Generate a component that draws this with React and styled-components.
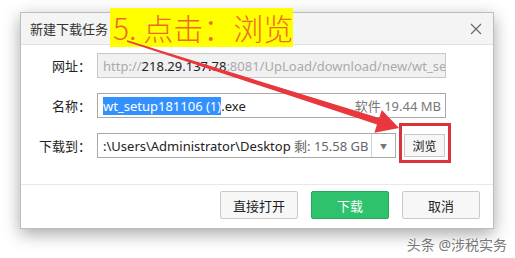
import React from 'react';
import styled, { createGlobalStyle } from 'styled-components';

const GlobalStyle = createGlobalStyle`
  html, body {
    margin: 0;
    padding: 0;
    background: #fff;
  }
  body {
    font-family: "Noto Sans", "Noto Sans CJK SC", sans-serif;
    font-size: 13px;
    color: #222;
  }
`;

const Page = styled.div`
  position: relative;
  width: 515px;
  height: 258px;
  overflow: hidden;
  display: flex;
  flex-direction: column;
`;

const Dialog = styled.div`
  margin: 12px 0 0 20px;
  width: 474px;
  background: #fff;
  border: 1px solid #bdbdbd;
  box-sizing: border-box;
  box-shadow: 0 5px 16px rgba(0, 0, 0, 0.35);
  display: flex;
  flex-direction: column;
`;

const TitleBar = styled.div`
  height: 31px;
  background: #f4f4f4;
  border-bottom: 1px solid #e2e2e2;
  display: flex;
  align-items: center;
  justify-content: space-between;
  padding: 0 10px 0 9px;
  font-size: 13px;
  color: #333;
`;

const Close = styled.div`
  width: 14px;
  height: 14px;
  display: flex;
  align-items: center;
  justify-content: center;
`;

const Body = styled.div`
  padding: 8px 0 26px;
  display: flex;
  flex-direction: column;
  gap: 15px;
  border-bottom: 1px solid #e8e8e8;
`;

const Row = styled.div`
  display: flex;
  align-items: center;
  height: 25px;
`;

const Label = styled.div`
  width: 70px;
  text-align: right;
  padding-right: 6px;
  font-size: 13px;
  color: #222;
`;

const Field = styled.div`
  width: ${p => p.$w}px;
  height: 25px;
  box-sizing: border-box;
  border: 1px solid ${p => (p.$disabled ? '#c8c8c8' : '#a9a9a9')};
  background: ${p => (p.$disabled ? '#f1f1f1' : '#fff')};
  display: flex;
  align-items: center;
  padding: 0 4px 0 5px;
  font-size: 13px;
  white-space: nowrap;
  overflow: hidden;
`;

const Grey = styled.span`
  color: ${p => p.$c || '#aaa'};
`;

const Selected = styled.span`
  background: #3390ff;
  color: #fff;
`;

const Extra = styled.span`
  margin-left: auto;
  color: #777;
`;

const Caret = styled.div`
  margin-left: auto;
  width: 23px;
  height: 23px;
  border-left: 1px solid #d4d4d4;
  display: flex;
  align-items: center;
  justify-content: center;
  font-size: 7px;
  color: #777;
  margin-right: -4px;
`;

const SmallButton = styled.button`
  margin-left: 8px;
  width: 41px;
  height: 23px;
  border: 1px solid #c9c9c9;
  background: #f7f7f7;
  font-family: inherit;
  font-size: 12px;
  color: #111;
  padding: 0;
`;

const Footer = styled.div`
  display: flex;
  justify-content: flex-end;
  gap: 13px;
  padding: 6px 13px 9px 0;
`;

const Button = styled.button`
  width: 78px;
  height: 28px;
  font-family: inherit;
  font-size: 13px;
  padding: 0;
  border: 1px solid ${p => (p.$primary ? '#25a95b' : '#cacaca')};
  background: ${p => (p.$primary ? '#2fc26c' : '#f7f7f7')};
  color: ${p => (p.$primary ? '#fff' : '#222')};
  border-radius: 2px;
`;

const Note = styled.div`
  position: absolute;
  left: 110px;
  top: 8px;
  width: 183px;
  height: 39px;
  background: #ffff00;
  color: #ee6a24;
  font-family: "Noto Sans CJK SC", sans-serif;
  font-weight: 300;
  font-size: 30px;
  line-height: 39px;
  padding-left: 3px;
  box-sizing: border-box;
  white-space: nowrap;
`;

const Frame = styled.div`
  position: absolute;
  left: 399px;
  top: 123px;
  width: 52px;
  height: 40px;
  box-sizing: border-box;
  border: 3px solid #d8353b;
`;

const Arrow = styled.svg`
  position: absolute;
  left: 0;
  top: 0;
  pointer-events: none;
`;

const Watermark = styled.div`
  align-self: flex-end;
  margin: 5px 8px 0 0;
  font-size: 14px;
  color: #777;
  text-shadow: 0 0 2px #fff, 0 0 2px #fff;
`;

const App = () => (
  <Page>
    <GlobalStyle />
    <Dialog>
      <TitleBar>
        <span>新建下载任务</span>
        <Close>
          <svg width="12" height="12" viewBox="0 0 12 12">
            <path d="M1 1 L11 11 M11 1 L1 11" stroke="#666" strokeWidth="1.1" />
          </svg>
        </Close>
      </TitleBar>
      <Body>
        <Row>
          <Label>网址：</Label>
          <Field $w={349} $disabled>
            <Grey>http://</Grey>
            <span>218.29.137.78</span>
            <Grey>:8081/UpLoad/download/new/wt_setup181106 (1).exe</Grey>
          </Field>
        </Row>
        <Row>
          <Label>名称：</Label>
          <Field $w={349}>
            <Selected>wt_setup181106 (1)</Selected>
            <span>.exe</span>
            <Extra>软件 19.44 MB</Extra>
          </Field>
        </Row>
        <Row>
          <Label>下载到：</Label>
          <Field $w={299}>
            <span>:\Users\Administrator\Desktop&nbsp;</span>
            <Grey $c="#666">剩: 15.58 GB</Grey>
            <Caret>▼</Caret>
          </Field>
          <SmallButton>浏览</SmallButton>
        </Row>
      </Body>
      <Footer>
        <Button>直接打开</Button>
        <Button $primary>下载</Button>
        <Button>取消</Button>
      </Footer>
    </Dialog>
    <Watermark>头条 @涉税实务</Watermark>
    <Note>5. 点击：浏览</Note>
    <Frame />
    <Arrow width="515" height="258" viewBox="0 0 515 258">
      <polygon
        points="127.2,40.3 379.2,118 381.8,109.9 399,128 374.4,132.7 377,124.6 126.8,41.7"
        fill="#e8383d"
      />
    </Arrow>
  </Page>
);

export default App;
